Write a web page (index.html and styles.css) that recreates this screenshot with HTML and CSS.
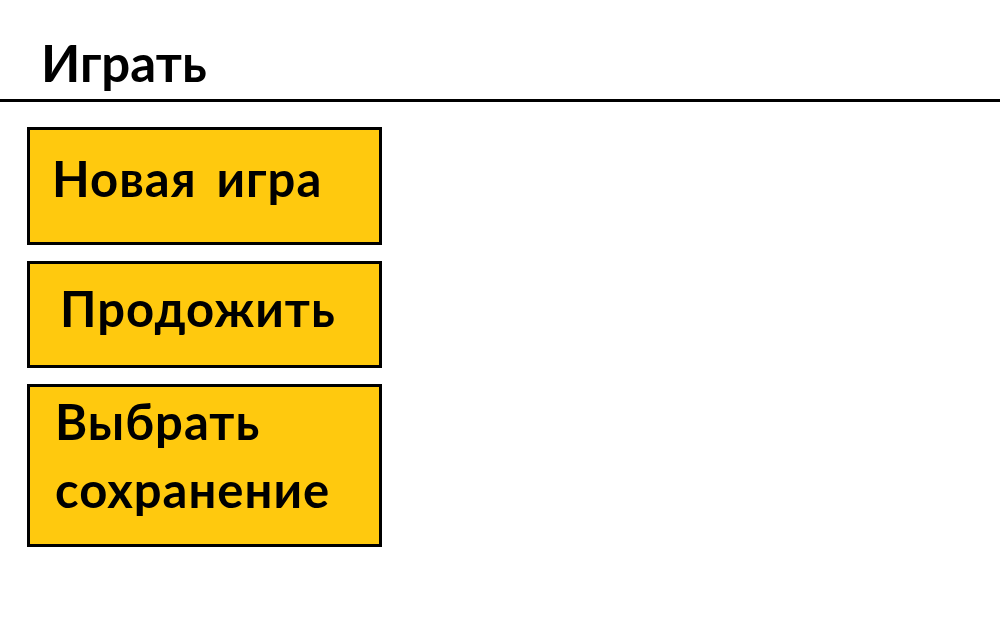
FILE: index.html
```html
<!DOCTYPE html>
<html lang="ru">
<head>
  <meta charset="UTF-8"/>
  <meta name="viewport" content="width=device-width,initial-scale=1.0"/>
  <title>Играть</title>
  <link rel="stylesheet" href="styles.css">
</head>
<body>

  <!-- HEADER -->
  <div class="header">
    <h1 class="title">Играть</h1>
  </div>

  <!-- MENU -->
  <div class="menu">
    <div class="menu-item item-new">Новая игра</div>
    <div class="menu-item item-continue">Продожить</div>
    <div class="menu-item item-load">Выбрать<br>сохранение</div>
  </div>

</body>
</html>
```

FILE: styles.css
```css
/* RESET */
* {
  margin: 0;
  padding: 0;
  box-sizing: border-box;
}

html, body {
  height: 100%;
  background: #fff;
  color: #000;
  font-family: "Comic Sans MS", Lato, sans-serif;
  font-weight: bold;
}

/* HEADER */
.header {
  height: 102px;
  padding: 33px 0 0 41px;
  border-bottom: 3px solid #000;
}

.title {
  font-size: 51px;
  line-height: 60px;
  font-weight: bold;
}

/* MENU */
.menu {
  display: flex;
  flex-direction: column;
  gap: 16px;
  width: 355px;
  margin: 25px 0 0 27px;
}

.menu-item {
  background: #ffc90e;
  border: 3px solid #000;
  font-size: 49px;
  line-height: 68px;
  letter-spacing: 1px;
  padding-left: 22px;
}

.item-new {
  height: 118px;
  padding-top: 14px;
  word-spacing: 7px;
}

.item-continue {
  height: 107px;
  padding-top: 10px;
  padding-left: 30px;
}

.item-load {
  height: 163px;
  padding-top: 0;
  padding-left: 25px;
}
```
